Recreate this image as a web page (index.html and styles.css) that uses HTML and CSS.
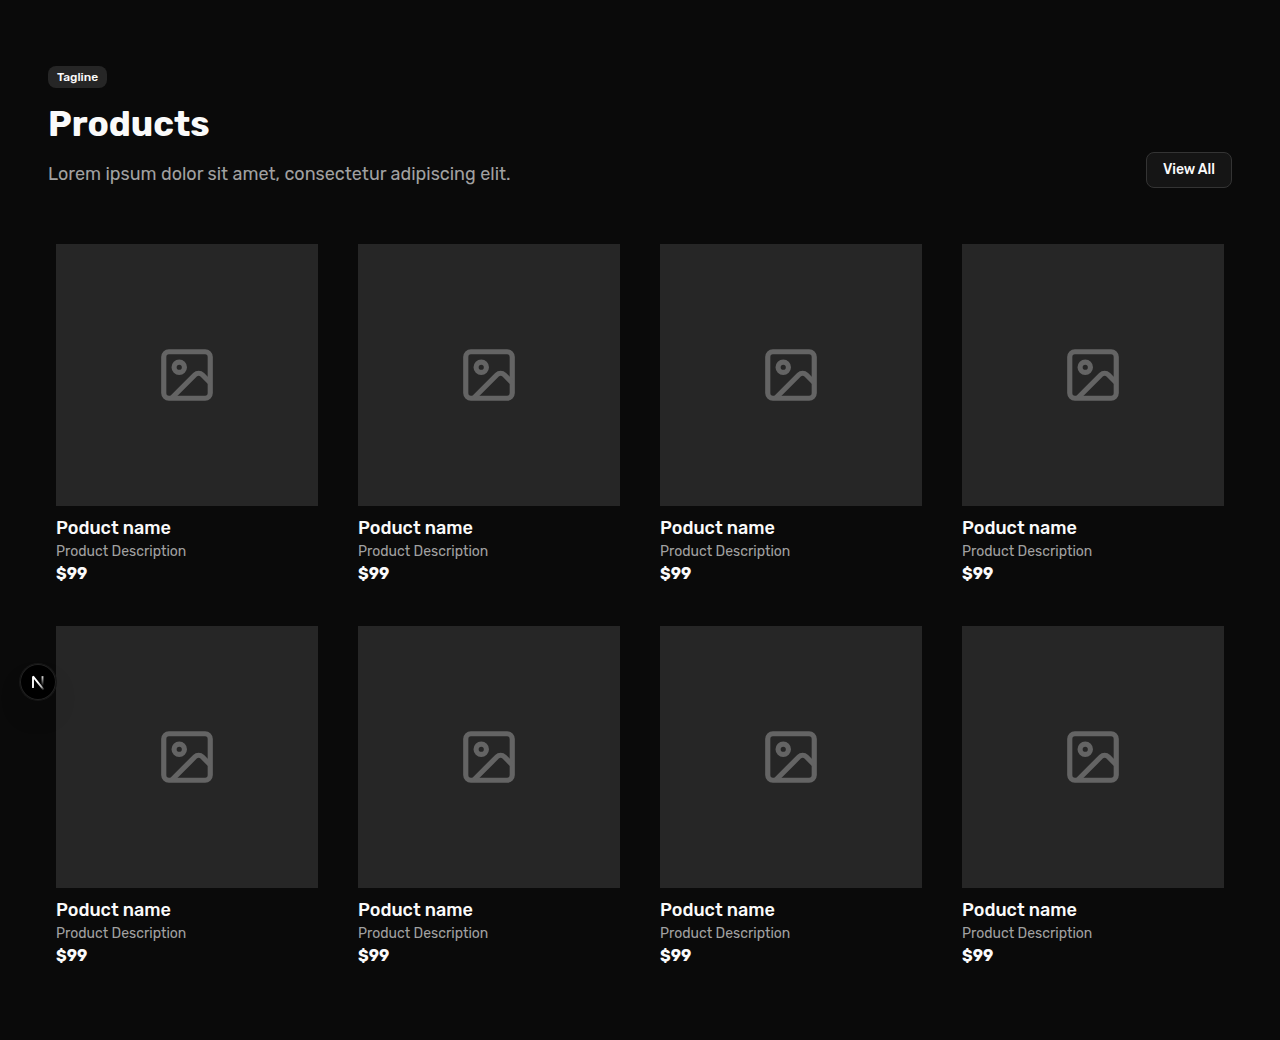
FILE: index.html
```html
<!DOCTYPE html>
<html lang="en">
<head>
<meta charset="utf-8">
<meta name="viewport" content="width=device-width, initial-scale=1">
<title>Products</title>
<link rel="stylesheet" href="styles.css">
</head>
<body>
<svg class="sprite" aria-hidden="true">
  <symbol id="image-icon" viewBox="0 0 24 24">
    <g fill="none" stroke="currentColor" stroke-width="2" stroke-linecap="round" stroke-linejoin="round">
      <rect x="3" y="3" width="18" height="18" rx="2" ry="2"/>
      <circle cx="9" cy="9" r="2"/>
      <path stroke-linecap="butt" d="m21 15-3.086-3.086a2 2 0 0 0-2.828 0L6 21"/>
    </g>
  </symbol>
</svg>
<main class="section">
  <header class="header">
    <div class="intro">
      <span class="badge">Tagline</span>
      <h1 class="title">Products</h1>
      <p class="lead">Lorem ipsum dolor sit amet, consectetur adipiscing elit.</p>
    </div>
    <button class="button" type="button">View All</button>
  </header>
  <div class="grid">
    <article class="card"><div class="thumb"><svg class="icon"><use href="#image-icon"/></svg></div><h2 class="name">Poduct name</h2><p class="description">Product Description</p><p class="price">$99</p></article>
    <article class="card"><div class="thumb"><svg class="icon"><use href="#image-icon"/></svg></div><h2 class="name">Poduct name</h2><p class="description">Product Description</p><p class="price">$99</p></article>
    <article class="card"><div class="thumb"><svg class="icon"><use href="#image-icon"/></svg></div><h2 class="name">Poduct name</h2><p class="description">Product Description</p><p class="price">$99</p></article>
    <article class="card"><div class="thumb"><svg class="icon"><use href="#image-icon"/></svg></div><h2 class="name">Poduct name</h2><p class="description">Product Description</p><p class="price">$99</p></article>
    <article class="card"><div class="thumb"><svg class="icon"><use href="#image-icon"/></svg></div><h2 class="name">Poduct name</h2><p class="description">Product Description</p><p class="price">$99</p></article>
    <article class="card"><div class="thumb"><svg class="icon"><use href="#image-icon"/></svg></div><h2 class="name">Poduct name</h2><p class="description">Product Description</p><p class="price">$99</p></article>
    <article class="card"><div class="thumb"><svg class="icon"><use href="#image-icon"/></svg></div><h2 class="name">Poduct name</h2><p class="description">Product Description</p><p class="price">$99</p></article>
    <article class="card"><div class="thumb"><svg class="icon"><use href="#image-icon"/></svg></div><h2 class="name">Poduct name</h2><p class="description">Product Description</p><p class="price">$99</p></article>
  </div>
</main>
<button class="devtools" type="button" aria-label="Open developer tools">
  <svg class="devtools-logo" viewBox="0 0 36 36" fill="none" stroke-width="1.86" aria-hidden="true">
    <defs>
      <linearGradient id="diagonal" gradientUnits="userSpaceOnUse" x1="18" y1="18" x2="24" y2="26">
        <stop stop-color="#fff"/><stop offset=".6" stop-color="#fff" stop-opacity=".7"/><stop offset="1" stop-color="#fff" stop-opacity="0"/>
      </linearGradient>
      <linearGradient id="stem" gradientUnits="userSpaceOnUse" x1="22" y1="12" x2="22" y2="22">
        <stop stop-color="#fff" stop-opacity=".9"/><stop offset="1" stop-color="#fff" stop-opacity="0"/>
      </linearGradient>
    </defs>
    <path stroke="url(#diagonal)" stroke-linejoin="bevel" d="M24 26.2 13 12.4V24"/>
    <path stroke="url(#stem)" d="M22.5 12.2V24"/>
  </svg>
</button>
</body>
</html>
```
FILE: styles.css
```css
* {
  box-sizing: border-box;
}

body {
  margin: 0;
  background: #0a0a0a;
  color: #fafafa;
  font-family: Rubik, Roboto, "Liberation Sans", sans-serif;
}

h1, h2, p {
  margin: 0;
}

.sprite {
  position: absolute;
  width: 0;
  height: 0;
}

.section {
  display: flex;
  flex-direction: column;
  gap: 48px;
  padding: 66px 48px 64px;
}

.header {
  display: flex;
  align-items: flex-end;
  justify-content: space-between;
  gap: 24px;
}

.intro {
  display: flex;
  flex-direction: column;
  align-items: flex-start;
  gap: 16px;
}

.badge {
  padding: 3px 9px;
  border-radius: 8px;
  background: #262626;
  font-size: 12px;
  font-weight: 500;
  line-height: 16px;
}

.title {
  font-size: 35px;
  font-weight: 700;
  line-height: 40px;
}

.lead {
  color: #a1a1a1;
  font-size: 18px;
  line-height: 28px;
}

.button {
  flex: none;
  padding: 7px 16px;
  border: 1px solid #343434;
  border-radius: 8px;
  background: #151515;
  color: inherit;
  font: inherit;
  font-size: 14px;
  font-weight: 500;
  line-height: 20px;
}

.grid {
  display: grid;
  grid-template-columns: repeat(4, minmax(0, 1fr));
  gap: 24px;
}

.card {
  padding: 8px;
}

.thumb {
  display: flex;
  align-items: center;
  justify-content: center;
  aspect-ratio: 1;
  margin-bottom: 8px;
  background: #262626;
}

.icon {
  width: 62px;
  height: 62px;
  color: #646464;
}

.name {
  font-size: 18px;
  font-weight: 500;
  line-height: 28px;
}

.description {
  color: #a1a1a1;
  font-size: 14px;
  line-height: 20px;
}

.price {
  font-size: 16px;
  font-weight: 700;
  line-height: 24px;
}

.devtools {
  position: absolute;
  top: 664px;
  left: 20px;
  width: 36px;
  height: 36px;
  padding: 0;
  border: 0;
  border-radius: 50%;
  background: #000;
  box-shadow: 0 0 0 1px #171717, inset 0 0 0 1px #222, 0 16px 32px -8px rgba(0, 0, 0, 0.24);
}

.devtools-logo {
  display: block;
  width: 36px;
  height: 36px;
}

@media (max-width: 900px) {
  .grid {
    grid-template-columns: repeat(2, minmax(0, 1fr));
  }
}
```
